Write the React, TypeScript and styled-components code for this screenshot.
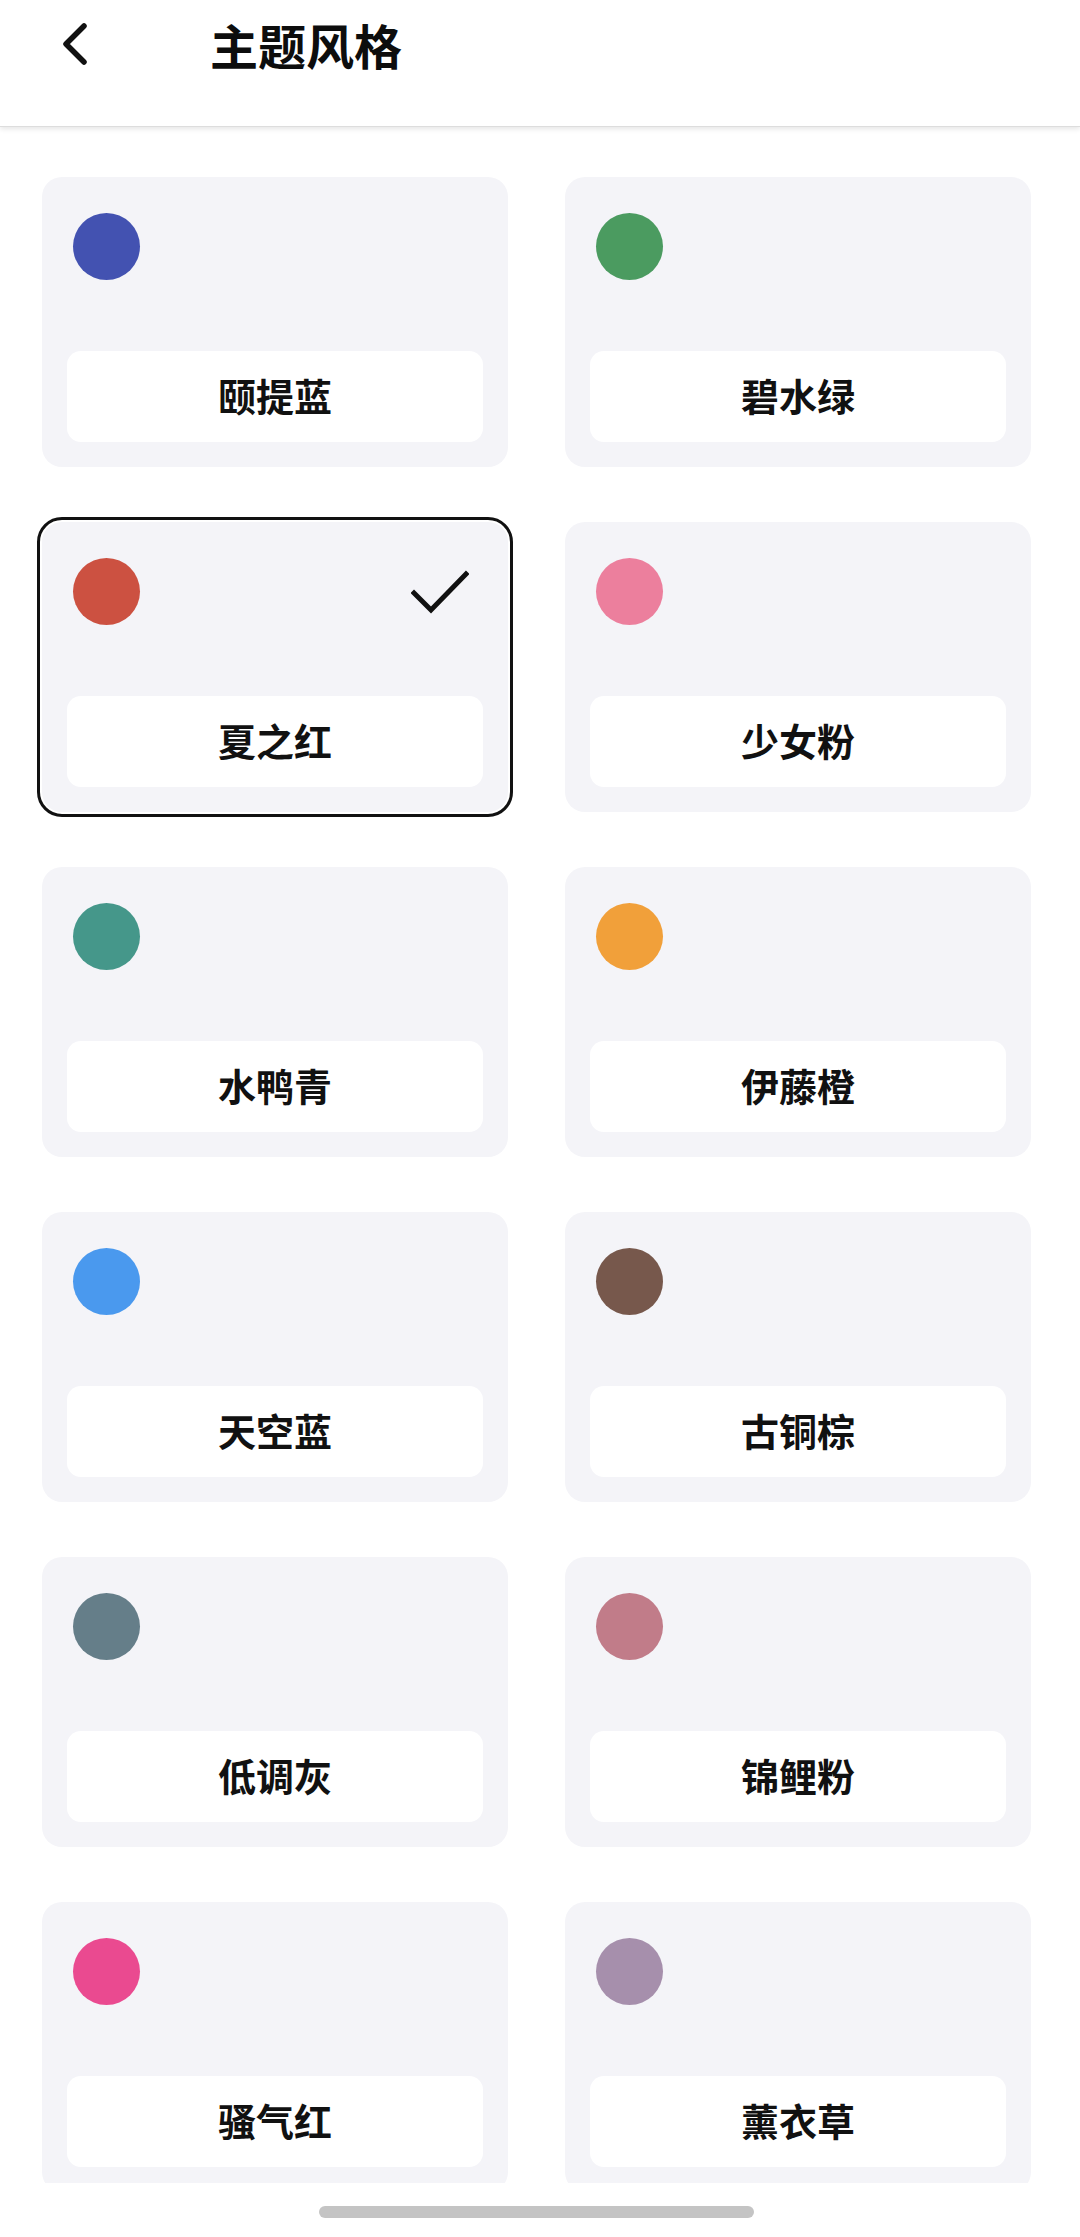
import React from 'react';
import styled, { createGlobalStyle } from 'styled-components';

type Theme = {
  name: string;
  color: string;
};

const themes: Theme[] = [
  { name: '颐提蓝', color: '#4352b1' },
  { name: '碧水绿', color: '#4b9b60' },
  { name: '夏之红', color: '#cc5141' },
  { name: '少女粉', color: '#ec7f9d' },
  { name: '水鸭青', color: '#45978a' },
  { name: '伊藤橙', color: '#f1a03a' },
  { name: '天空蓝', color: '#4a99ee' },
  { name: '古铜棕', color: '#77584c' },
  { name: '低调灰', color: '#657e89' },
  { name: '锦鲤粉', color: '#c17c89' },
  { name: '骚气红', color: '#ea4a90' },
  { name: '薰衣草', color: '#a68fac' },
];

const GlobalStyle = createGlobalStyle`
  html, body {
    margin: 0;
    padding: 0;
    background: #ffffff;
  }
  body {
    font-family: "Noto Sans CJK SC", "Noto Sans", sans-serif;
    color: #111111;
  }
`;

const Page = styled.div`
  position: relative;
  width: 1080px;
  height: 2237px;
  background: #ffffff;
  display: flex;
  flex-direction: column;
  overflow: hidden;
`;

const Header = styled.header`
  position: relative;
  z-index: 2;
  height: 127px;
  flex: 0 0 127px;
  box-sizing: border-box;
  display: flex;
  align-items: flex-start;
  padding-top: 19px;
  background: #ffffff;
  border-bottom: 1px solid #dddddd;
  box-shadow: 0 2px 5px rgba(0, 0, 0, 0.1);
`;

const BackButton = styled.button`
  width: 40px;
  height: 50px;
  margin-left: 55px;
  padding: 0;
  border: none;
  background: transparent;
  display: flex;
  align-items: center;
  justify-content: center;
`;

const Title = styled.h1`
  margin: 0 0 0 115px;
  font-size: 48px;
  line-height: 50px;
  font-weight: 700;
  color: #0d0d0d;
`;

const ListArea = styled.main`
  height: 2056px;
  overflow: hidden;
`;

const Grid = styled.div`
  display: grid;
  grid-template-columns: repeat(2, 466px);
  column-gap: 57px;
  row-gap: 55px;
  padding: 50px 49px 0 42px;
`;

const Card = styled.div<{ $selected?: boolean }>`
  height: 290px;
  box-sizing: border-box;
  display: flex;
  flex-direction: column;
  padding: 36px 25px 25px;
  border-radius: 20px;
  background: #f4f4f8;
  outline: ${(p) => (p.$selected ? '3px solid #111111' : 'none')};
  outline-offset: 2px;
`;

const TopRow = styled.div`
  display: flex;
  align-items: center;
  justify-content: space-between;
  height: 67px;
`;

const Swatch = styled.span<{ $color: string }>`
  width: 67px;
  height: 67px;
  margin-left: 6px;
  border-radius: 50%;
  background: ${(p) => p.$color};
`;

const CheckIcon = styled.svg`
  width: 58px;
  height: 46px;
  margin-right: 14px;
`;

const Label = styled.div`
  margin-top: auto;
  height: 91px;
  box-sizing: border-box;
  padding-bottom: 5px;
  border-radius: 14px;
  background: #ffffff;
  display: flex;
  align-items: center;
  justify-content: center;
  font-size: 38px;
  font-weight: 700;
  color: #111111;
`;

const HomeIndicator = styled.div`
  position: absolute;
  left: 319px;
  bottom: 19px;
  width: 435px;
  height: 12px;
  border-radius: 6px;
  background: #c4c4c4;
`;

function ThemeCard({ theme, selected }: { theme: Theme; selected: boolean }) {
  return (
    <Card $selected={selected}>
      <TopRow>
        <Swatch $color={theme.color} />
        {selected && (
          <CheckIcon viewBox="0 0 58 46" fill="none">
            <path
              d="M3 24 L20 41 L55 5"
              stroke="#111111"
              strokeWidth="5"
              strokeLinecap="square"
              strokeLinejoin="miter"
            />
          </CheckIcon>
        )}
      </TopRow>
      <Label>{theme.name}</Label>
    </Card>
  );
}

export default function App() {
  const selected = '夏之红';

  return (
    <>
      <GlobalStyle />
      <Page>
        <Header>
          <BackButton aria-label="返回">
            <svg width="30" height="44" viewBox="0 0 30 44" fill="none">
              <path
                d="M24 4 L6 22 L24 40"
                stroke="#111111"
                strokeWidth="5.5"
                strokeLinecap="round"
                strokeLinejoin="round"
              />
            </svg>
          </BackButton>
          <Title>主题风格</Title>
        </Header>
        <ListArea>
          <Grid>
            {themes.map((t) => (
              <ThemeCard key={t.name} theme={t} selected={t.name === selected} />
            ))}
          </Grid>
        </ListArea>
        <HomeIndicator />
      </Page>
    </>
  );
}
